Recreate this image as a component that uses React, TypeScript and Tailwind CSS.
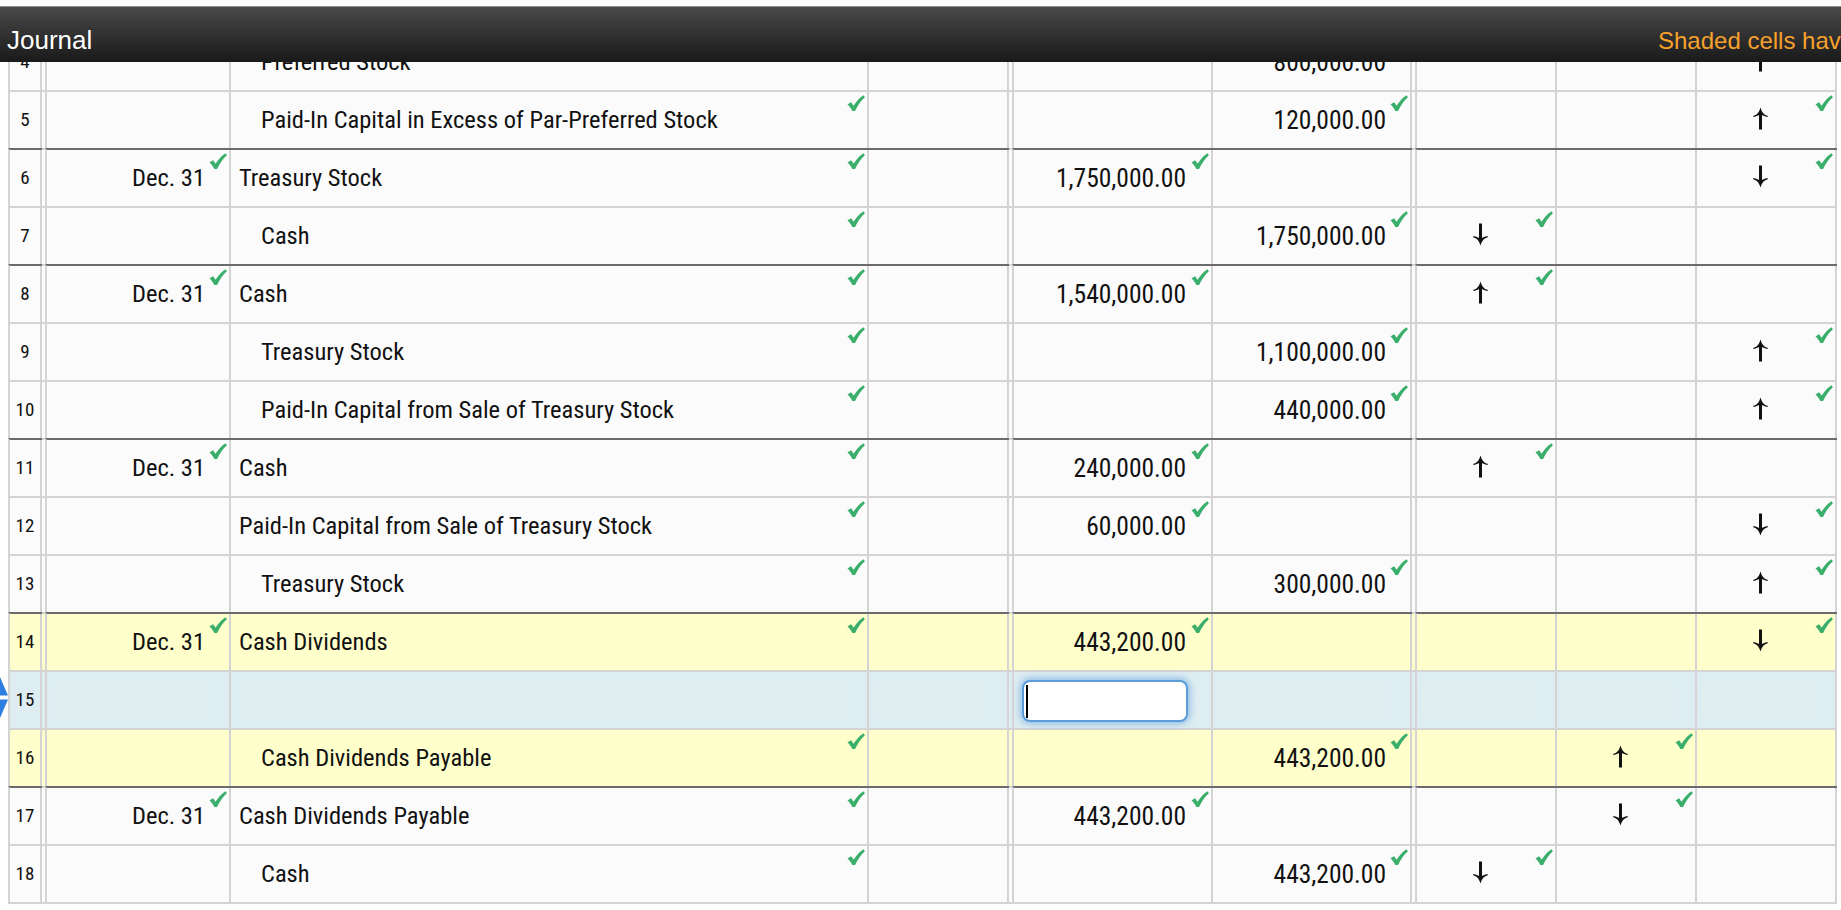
import React from "react";

type Row = {
  n: number;
  date?: string;
  account?: string;
  indent?: boolean;
  debit?: string;
  credit?: string;
  arrowCol?: 0 | 1 | 2;
  arrow?: "up" | "down";
  dark?: boolean;
  tone?: "yellow" | "blue";
};

const rows: Row[] = [
  { n: 4, dark: false, account: "Preferred Stock", indent: true, credit: "800,000.00", arrowCol: 2, arrow: "up" },
  { n: 5, account: "Paid-In Capital in Excess of Par-Preferred Stock", indent: true, credit: "120,000.00", arrowCol: 2, arrow: "up" },
  { n: 6, dark: true, date: "Dec. 31", account: "Treasury Stock", debit: "1,750,000.00", arrowCol: 2, arrow: "down" },
  { n: 7, account: "Cash", indent: true, credit: "1,750,000.00", arrowCol: 0, arrow: "down" },
  { n: 8, dark: true, date: "Dec. 31", account: "Cash", debit: "1,540,000.00", arrowCol: 0, arrow: "up" },
  { n: 9, account: "Treasury Stock", indent: true, credit: "1,100,000.00", arrowCol: 2, arrow: "up" },
  { n: 10, account: "Paid-In Capital from Sale of Treasury Stock", indent: true, credit: "440,000.00", arrowCol: 2, arrow: "up" },
  { n: 11, dark: true, date: "Dec. 31", account: "Cash", debit: "240,000.00", arrowCol: 0, arrow: "up" },
  { n: 12, account: "Paid-In Capital from Sale of Treasury Stock", debit: "60,000.00", arrowCol: 2, arrow: "down" },
  { n: 13, account: "Treasury Stock", indent: true, credit: "300,000.00", arrowCol: 2, arrow: "up" },
  { n: 14, dark: true, tone: "yellow", date: "Dec. 31", account: "Cash Dividends", debit: "443,200.00", arrowCol: 2, arrow: "down" },
  { n: 15, tone: "blue" },
  { n: 16, tone: "yellow", account: "Cash Dividends Payable", indent: true, credit: "443,200.00", arrowCol: 1, arrow: "up" },
  { n: 17, dark: true, date: "Dec. 31", account: "Cash Dividends Payable", debit: "443,200.00", arrowCol: 1, arrow: "down" },
  { n: 18, account: "Cash", indent: true, credit: "443,200.00", arrowCol: 0, arrow: "down" },
];

const FONT = "font-['Liberation_Sans_Narrow','Arial_Narrow','Roboto_Condensed','DejaVu_Sans_Condensed',sans-serif]";

function Check() {
  return (
    <span className="absolute right-[2px] top-[3px] block leading-none">
      <svg width="18" height="17" viewBox="0 0 17 16">
        <path
          d="M0.4 9 C1.6 7.9 2.8 7.2 4 6.8 L6.1 10.2 C8.8 6.2 12 2.7 15.6 0.3 L16.9 2 C13.2 5.2 10.2 9.4 7.6 15.2 L5 15.2 C3.8 12.6 2.4 10.6 0.4 9 Z"
          fill="#3aae6b"
        />
      </svg>
    </span>
  );
}

function ArrowIcon({ dir }: { dir: "up" | "down" }) {
  return (
    <svg width="15" height="23" viewBox="0 0 15 23">
      <g transform={dir === "up" ? "rotate(180 7.5 11.5)" : undefined}>
        <rect x="6" y="0.5" width="3" height="18" fill="#111" />
        <path
          d="M0.3 14.2 C3.8 15 6 17.4 7.5 22.6 C9 17.4 11.2 15 14.7 14.2 L14.7 13 C11.4 13.6 9.2 14.6 7.5 15.8 C5.8 14.6 3.6 13.6 0.3 13 Z"
          fill="#111"
        />
      </g>
    </svg>
  );
}

function Ghost({ pl = "pl-[8px]", pr = "pr-[22px]" }: { pl?: string; pr?: string }) {
  return (
    <div className={`h-full w-full py-[9px] ${pl} ${pr}`}>
      <div className="h-full w-full rounded-[6px] bg-[#e1eef0]" />
    </div>
  );
}

function Cell({ w, children, className = "" }: { w: string; children?: React.ReactNode; className?: string }) {
  return (
    <div className={`relative flex h-full shrink-0 items-center border-r-2 border-[#d4d4d4] ${w} ${className}`}>
      {children}
    </div>
  );
}

function JRow({ r, last }: { r: Row; last?: boolean }) {
  const bg = r.tone === "yellow" ? "bg-[#ffffcc]" : r.tone === "blue" ? "bg-[#deedf1]" : "bg-[#fbfbfb]";
  const top = r.dark ? "border-t-[#6b6b6b]" : "border-t-[#d4d4d4]";
  const bottom = last ? "border-b-2" : "";
  const grp = `flex h-full shrink-0 border-l-2 border-t-2 border-[#d4d4d4] ${top} ${bottom}`;
  const gap = `h-full w-[3px] shrink-0 border-t-2 border-[#d4d4d4] ${bottom}`;
  const blue = r.tone === "blue";

  const arrowCell = (i: 0 | 1 | 2) => (
    <Cell w="w-[140px]" className="justify-center pr-[12px]" key={i}>
      {blue ? (
        <Ghost pl="pl-[5px]" pr="pr-[9px]" />
      ) : r.arrowCol === i && r.arrow ? (
        <>
          <div className="-mt-[3px]">
            <ArrowIcon dir={r.arrow} />
          </div>
          <Check />
        </>
      ) : null}
    </Cell>
  );

  return (
    <div className={`flex ${last ? "h-[60px]" : "h-[58px]"}`}>
      <div className="relative h-full w-[8px] shrink-0">
        {blue && (
          <svg width="8" height="58" viewBox="0 0 8 58" className="block">
            <path d="M0 7 L8 25.5 L0 25.5 Z" fill="#2f7fe0" />
            <path d="M0 29.5 L8 29.5 L0 48 Z" fill="#2f7fe0" />
          </svg>
        )}
      </div>
      <div className={`flex h-full ${bg} ${FONT} text-[#111]`}>
        {/* group 1: row number */}
        <div className={grp}>
          <Cell w="w-[32px]" className="justify-center text-[19px]">
            {r.n}
          </Cell>
        </div>
        <div className={gap} />
        {/* group 2: date / account / ref */}
        <div className={grp}>
          <Cell w="w-[184px]" className="justify-end pr-[24px] text-[24.5px]">
            {blue ? <Ghost pl="pl-[7px]" pr="pr-0" /> : r.date ? (<><span>{r.date}</span><Check /></>) : null}
          </Cell>
          <Cell w="w-[638px]" className={`text-[24.5px] ${r.indent ? "pl-[30px]" : "pl-[8px]"}`}>
            {blue ? <Ghost pl="pl-0" /> : r.account ? (<><span className="whitespace-nowrap">{r.account}</span><Check /></>) : null}
          </Cell>
          <Cell w="w-[140px]">{blue ? <Ghost /> : null}</Cell>
        </div>
        <div className={gap} />
        {/* group 3: debit / credit */}
        <div className={grp}>
          <Cell w="w-[199px]" className={`justify-end text-[25.5px] ${blue ? "items-start pl-[8px] pr-[23px] pt-[8px]" : "pr-[25px]"}`}>
            {blue ? (
              <div className="flex h-[42px] w-full items-center rounded-[8px] border-2 border-[#5b9dd9] bg-white pl-[2px] shadow-[0_0_7px_2px_rgba(80,150,225,0.55)]">
                <span className="block h-[33px] w-[2px] bg-black" />
              </div>
            ) : r.debit ? (
              <>
                <span>{r.debit}</span>
                <Check />
              </>
            ) : null}
          </Cell>
          <Cell w="w-[199px]" className="justify-end pr-[24px] text-[25.5px]">
            {blue ? <Ghost pl="pl-[7px]" pr="pr-0" /> : r.credit ? (
              <>
                <span>{r.credit}</span>
                <Check />
              </>
            ) : null}
          </Cell>
        </div>
        <div className={gap} />
        {/* group 4: arrows */}
        <div className={grp}>
          {arrowCell(0)}
          {arrowCell(1)}
          {arrowCell(2)}
        </div>
      </div>
    </div>
  );
}

export default function App() {
  return (
    <div className="h-[910px] w-[1841px] overflow-hidden bg-white">
      <div className="h-[6px] bg-white" />
      <div className="flex h-[56px] items-baseline overflow-hidden border-t border-[#8f8f8f] bg-linear-to-b from-[#4a4a4a] to-[#1a1a1a] pl-[7px] pt-[14px] font-['Liberation_Sans',Arial,sans-serif]">
        <span className="w-[1651px] shrink-0 text-[26px] leading-normal text-white">Journal</span>
        <span className="shrink-0 whitespace-nowrap text-[24px] leading-normal text-[#f6a12b]">
          Shaded cells have feedback.
        </span>
      </div>
      <div className="h-[848px] overflow-hidden">
        <div className="-mt-[30px]">
          {rows.map((r, i) => (
            <JRow key={r.n} r={r} last={i === rows.length - 1} />
          ))}
        </div>
      </div>
    </div>
  );
}
